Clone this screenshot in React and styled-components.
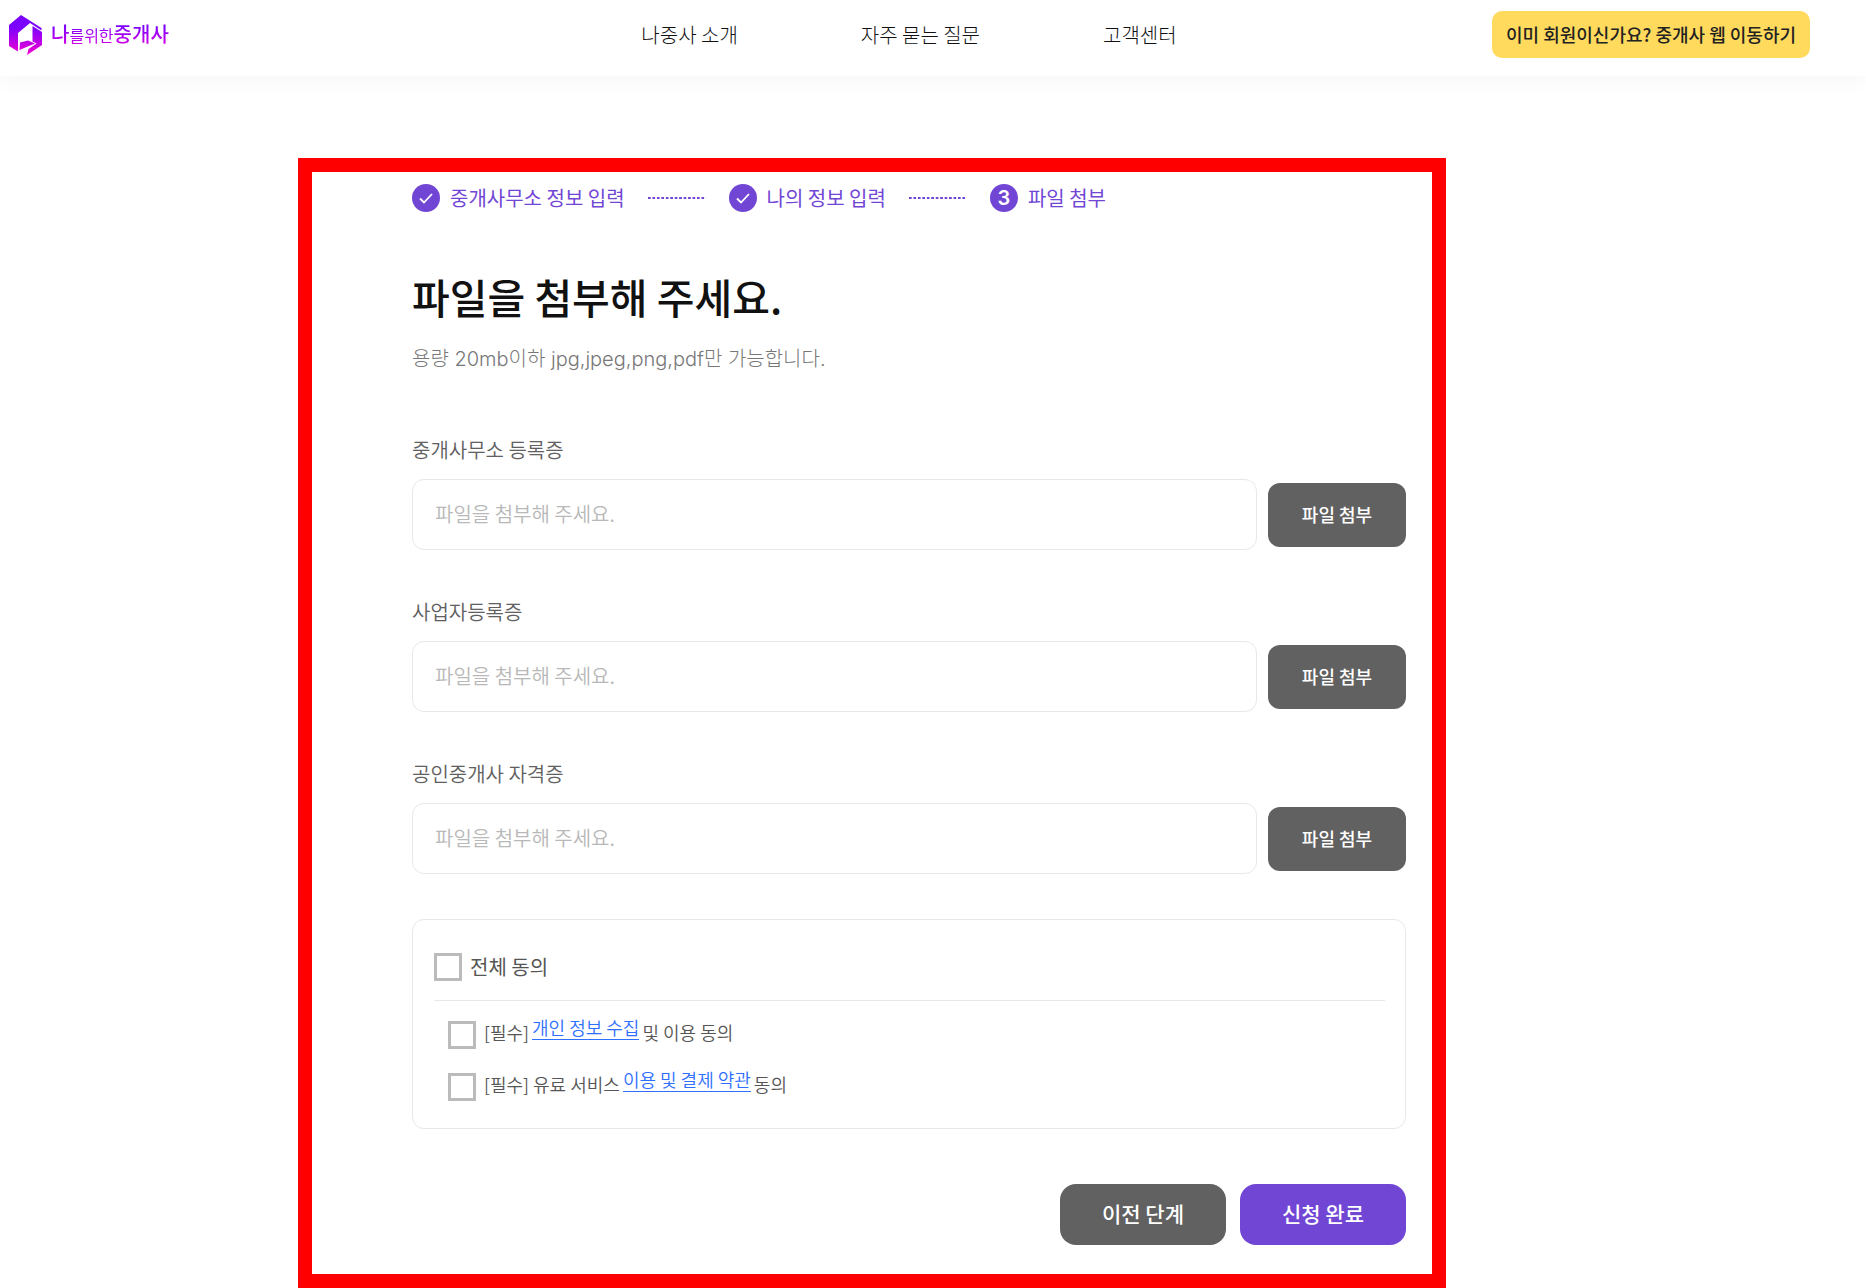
import React, { useState } from "react";
import styled, { createGlobalStyle } from "styled-components";

const GlobalStyle = createGlobalStyle`
  *, *::before, *::after { box-sizing: border-box; }
  body {
    margin: 0;
    background: #fff;
    color: #111;
    font-family: "Noto Sans CJK KR", "Noto Sans", sans-serif;
  }
  button, input { font-family: inherit; }
`;

const Header = styled.header`
  display: grid;
  grid-template-columns: 1fr auto 1fr;
  align-items: center;
  min-height: 76px;
  padding: 0 56px 7px 8px;
  background: #fff;
  box-shadow: 0 4px 20px rgba(0, 0, 0, 0.04);
`;

const Brand = styled.a`
  display: flex;
  align-items: center;
  gap: 9px;
  justify-self: start;
  text-decoration: none;
`;

const BrandName = styled.span`
  font-size: 20px;
  line-height: 28px;
  font-weight: 500;
  color: transparent;
  background: linear-gradient(#7a00ff 20%, #d400e6 85%);
  background-clip: text;
  -webkit-background-clip: text;
`;

const BrandSmall = styled.span`
  font-size: 16px;
  font-weight: 400;
`;

const Nav = styled.nav`
  display: flex;
  gap: 123px;
`;

const NavLink = styled.a`
  font-size: 20px;
  line-height: 28px;
  font-weight: 300;
  color: #111;
  text-decoration: none;
  white-space: nowrap;
`;

const MemberButton = styled.button`
  justify-self: end;
  height: 47px;
  padding: 0 14px 2px;
  border: 0;
  border-radius: 10px;
  background: #ffda5c;
  color: #222;
  font-size: 18px;
  font-weight: 500;
  white-space: nowrap;
`;

const Main = styled.main`
  display: grid;
  grid-template-columns: minmax(0, 298fr) minmax(0, 1148px) minmax(0, 420fr);
  padding-top: 82px;
`;

const Frame = styled.form`
  grid-column: 2;
  padding: 12px 26px 29px 100px;
  border: 14px solid #f00;
`;

const Steps = styled.ol`
  display: flex;
  align-items: center;
  gap: 23px;
  margin: 0;
  padding: 0;
  list-style: none;
`;

const Step = styled.li`
  display: flex;
  align-items: center;
  gap: 10px;
  font-size: 20px;
  line-height: 28px;
  color: #7246d5;
`;

const StepBadge = styled.span`
  display: flex;
  align-items: center;
  justify-content: center;
  width: 28px;
  height: 28px;
  border-radius: 50%;
  background: #7246d5;
  color: #fff;
  font-family: Inter, sans-serif;
  font-size: 20px;
  font-weight: 600;
`;

const StepDots = styled.li`
  width: 58px;
  height: 2px;
  background-image: linear-gradient(to right, #7246d5 60%, transparent 60%);
  background-size: calc(100% / 13) 2px;
`;

const Title = styled.h1`
  margin: 54px 0 0;
  font-size: 41px;
  line-height: 60px;
  font-weight: 500;
`;

const Hint = styled.p`
  margin: 18px 0 0;
  font-family: Inter, "Noto Sans CJK KR", sans-serif;
  font-size: 20px;
  line-height: 30px;
  font-weight: 300;
  color: #777;
`;

const Fields = styled.div`
  display: flex;
  flex-direction: column;
  gap: 48px;
  margin-top: 62px;
`;

const FieldLabel = styled.label`
  display: block;
  margin-bottom: 15px;
  font-size: 20px;
  line-height: 28px;
  font-weight: 350;
  color: #606060;
`;

const FieldRow = styled.div`
  display: flex;
  align-items: center;
  gap: 11px;
`;

const FileInput = styled.input`
  flex: 1;
  min-width: 0;
  height: 71px;
  padding: 0 22px 2px;
  border: 1px solid #e8e8e8;
  border-radius: 12px;
  background: #fff;
  color: #222;
  font-size: 20px;
  font-weight: 350;
  &::placeholder { color: #b8b8b8; opacity: 1; }
`;

const AttachButton = styled.button`
  width: 138px;
  height: 64px;
  padding: 0 0 2px;
  border: 0;
  border-radius: 12px;
  background: #616161;
  color: #fff;
  font-size: 18px;
  font-weight: 500;
`;

const Agreement = styled.fieldset`
  margin: 45px 0 0;
  padding: 33px 20px 27px 21px;
  border: 1px solid #e8e8e8;
  border-radius: 12px;
`;

const AgreeAll = styled.div`
  display: flex;
  align-items: center;
  gap: 8px;
  padding-bottom: 19px;
  border-bottom: 1px solid #e8e8e8;
  font-size: 20px;
  line-height: 28px;
  color: #555;
`;

const AgreeList = styled.div`
  display: grid;
  gap: 24px;
  padding: 20px 0 0 14px;
`;

const AgreeItem = styled.div`
  display: flex;
  align-items: flex-start;
  gap: 8px;
`;

const Checkbox = styled.input`
  appearance: none;
  flex: none;
  width: 28px;
  height: 28px;
  margin: 0;
  border: 3px solid #bbb;
  border-radius: 0;
  background: #fff;
  &:checked { background: #7246d5; border-color: #7246d5; }
`;

const AgreeText = styled.label`
  display: flex;
  align-items: flex-start;
  gap: 3px;
  font-size: 18px;
  line-height: 22px;
  font-weight: 350;
  color: #555;
`;

const TermsLink = styled.a`
  padding-bottom: 6px;
  border-bottom: 1px solid #2f6fff;
  line-height: 12px;
  color: #2f6fff;
  text-decoration: none;
`;

const Actions = styled.div`
  display: flex;
  justify-content: flex-end;
  gap: 14px;
  margin-top: 55px;
`;

const ActionButton = styled.button`
  width: 166px;
  height: 61px;
  padding: 0 0 3px;
  border: 0;
  border-radius: 16px;
  background: ${(p) => (p.$primary ? "#7246d5" : "#616161")};
  color: #fff;
  font-size: 21px;
  font-weight: 500;
`;

function Logo() {
  return (
    <svg width="34" height="40" viewBox="0 0 34 40" aria-hidden="true">
      <defs>
        <linearGradient id="brand" gradientUnits="userSpaceOnUse" x1="0" y1="0" x2="0" y2="40">
          <stop offset="0.3" stopColor="#7a00ff" />
          <stop offset="1" stopColor="#f500d0" />
        </linearGradient>
      </defs>
      <g fill="url(#brand)">
        <path d="M13 0 L33.5 13 V15.5 L22 8 L10 18 V36.5 L1 31 V10 Z" />
        <path d="M24.5 11 L34 17 V30 L19 40 L20.5 34 L28.5 28.5 L24.5 26.5 Z" />
        <path d="M12 27.5 L20 25.5 L27 28.5 L11.5 35 Z" />
      </g>
    </svg>
  );
}

function Check() {
  return (
    <svg width="16" height="12" viewBox="0 0 16 12" fill="none" stroke="#fff" strokeWidth="1.8" aria-label="완료">
      <path d="M2 6.5 L6 10.5 L14 2" />
    </svg>
  );
}

const navItems = ["나중사 소개", "자주 묻는 질문", "고객센터"];
const fields = [
  { id: "office", label: "중개사무소 등록증" },
  { id: "business", label: "사업자등록증" },
  { id: "license", label: "공인중개사 자격증" },
];

export default function App() {
  const [agreed, setAgreed] = useState({ privacy: false, terms: false });
  const toggle = (key) => setAgreed((a) => ({ ...a, [key]: !a[key] }));
  const all = agreed.privacy && agreed.terms;

  return (
    <>
      <GlobalStyle />
      <Header>
        <Brand href="#">
          <Logo />
          <BrandName>
            나<BrandSmall>를위한</BrandSmall>중개사
          </BrandName>
        </Brand>
        <Nav>
          {navItems.map((item) => (
            <NavLink key={item} href="#">{item}</NavLink>
          ))}
        </Nav>
        <MemberButton type="button">이미 회원이신가요? 중개사 웹 이동하기</MemberButton>
      </Header>
      <Main>
        <Frame onSubmit={(e) => e.preventDefault()}>
          <Steps>
            <Step><StepBadge><Check /></StepBadge>중개사무소 정보 입력</Step>
            <StepDots aria-hidden="true" />
            <Step><StepBadge><Check /></StepBadge>나의 정보 입력</Step>
            <StepDots aria-hidden="true" />
            <Step aria-current="step"><StepBadge>3</StepBadge>파일 첨부</Step>
          </Steps>
          <Title>파일을 첨부해 주세요.</Title>
          <Hint>용량 20mb이하 jpg,jpeg,png,pdf만 가능합니다.</Hint>
          <Fields>
            {fields.map(({ id, label }) => (
              <div key={id}>
                <FieldLabel htmlFor={id}>{label}</FieldLabel>
                <FieldRow>
                  <FileInput id={id} type="text" readOnly placeholder="파일을 첨부해 주세요." />
                  <AttachButton type="button">파일 첨부</AttachButton>
                </FieldRow>
              </div>
            ))}
          </Fields>
          <Agreement>
            <AgreeAll>
              <Checkbox
                id="all"
                type="checkbox"
                checked={all}
                onChange={() => setAgreed({ privacy: !all, terms: !all })}
              />
              <label htmlFor="all">전체 동의</label>
            </AgreeAll>
            <AgreeList>
              <AgreeItem>
                <Checkbox id="privacy" type="checkbox" checked={agreed.privacy} onChange={() => toggle("privacy")} />
                <AgreeText htmlFor="privacy">
                  <span>[필수]</span>
                  <TermsLink href="#">개인 정보 수집</TermsLink>
                  <span>및 이용 동의</span>
                </AgreeText>
              </AgreeItem>
              <AgreeItem>
                <Checkbox id="terms" type="checkbox" checked={agreed.terms} onChange={() => toggle("terms")} />
                <AgreeText htmlFor="terms">
                  <span>[필수] 유료 서비스</span>
                  <TermsLink href="#">이용 및 결제 약관</TermsLink>
                  <span>동의</span>
                </AgreeText>
              </AgreeItem>
            </AgreeList>
          </Agreement>
          <Actions>
            <ActionButton type="button">이전 단계</ActionButton>
            <ActionButton type="submit" $primary>신청 완료</ActionButton>
          </Actions>
        </Frame>
      </Main>
    </>
  );
}
